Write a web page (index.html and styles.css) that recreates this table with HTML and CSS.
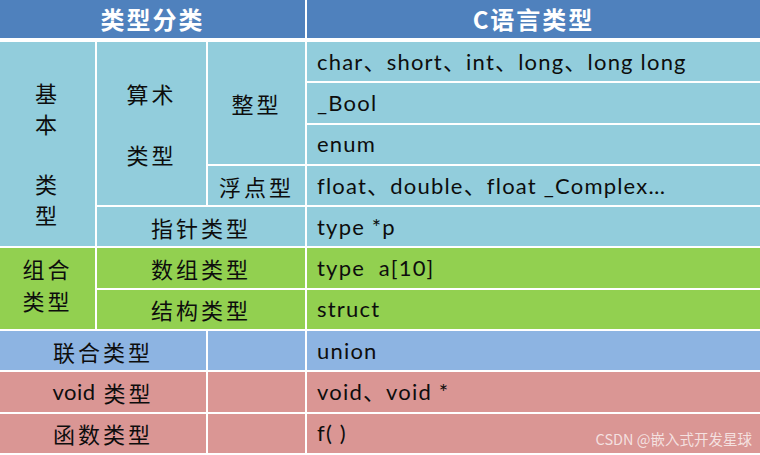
FILE: index.html
```html
<!DOCTYPE html>
<html lang="zh-CN">
<head>
<meta charset="utf-8">
<title>C语言类型</title>
<link rel="stylesheet" href="styles.css">
</head>
<body>
<div class="page">
  <div class="head">
    <div class="hcell">类型分类</div>
    <div class="hcell">C语言类型</div>
  </div>
  <div class="grid">
    <div class="cell cy c1 r1s5 stack"><span>基</span><span>本</span><span class="blank"></span><span>类</span><span>型</span></div>
    <div class="cell cy c2 r1s4 stack two"><span>算术</span><span class="blank"></span><span>类型</span></div>
    <div class="cell cy c3 r1s3 zh">整型</div>
    <div class="cell cy c4 r1 code">char、short、int、long、long long</div>
    <div class="cell cy c4 r2 code">_Bool</div>
    <div class="cell cy c4 r3 code">enum</div>
    <div class="cell cy c3 r4 zh">浮点型</div>
    <div class="cell cy c4 r4 code">float、double、float _Complex…</div>
    <div class="cell cy c23 r5 zh">指针类型</div>
    <div class="cell cy c4 r5 code">type *p</div>

    <div class="cell gr c1 r6s2 stack combo"><span>组合</span><span>类型</span></div>
    <div class="cell gr c23 r6 zh">数组类型</div>
    <div class="cell gr c4 r6 code">type&nbsp; a[10]</div>
    <div class="cell gr c23 r7 zh">结构类型</div>
    <div class="cell gr c4 r7 code">struct</div>

    <div class="cell bl c12 r8 zh">联合类型</div>
    <div class="cell bl c3 r8"></div>
    <div class="cell bl c4 r8 code">union</div>

    <div class="cell pk c12 r9 zh"><span class="lat">void</span>&nbsp;类型</div>
    <div class="cell pk c3 r9"></div>
    <div class="cell pk c4 r9 code">void、void *</div>

    <div class="cell pk c12 r10 zh">函数类型</div>
    <div class="cell pk c3 r10"></div>
    <div class="cell pk c4 r10 code">f( )</div>
  </div>
  <div class="mark">CSDN @嵌入式开发星球</div>
</div>
</body>
</html>
```

FILE: styles.css
```css
html, body {
  margin: 0;
  padding: 0;
  background: #ffffff;
}
body {
  width: 760px;
  height: 455px;
  overflow: hidden;
  font-family: "Noto Sans CJK SC", "Noto Sans", sans-serif;
}
.page {
  position: relative;
  width: 760px;
  height: 455px;
  background: #ffffff;
}
.head {
  display: grid;
  grid-template-columns: 305px 1fr;
  column-gap: 2px;
  height: 38px;
  margin-bottom: 4px;
}
.hcell {
  background: #4f81bd;
  color: #ffffff;
  font-size: 24px;
  font-weight: 700;
  letter-spacing: 2px;
  display: flex;
  align-items: center;
  justify-content: center;
  line-height: 1;
}
.grid {
  display: grid;
  grid-template-columns: 95px 109px 97px 1fr;
  grid-auto-rows: 39.3px;
  gap: 2px;
}
.cell {
  display: flex;
  align-items: center;
  justify-content: center;
  color: #0d0d0d;
  line-height: 1;
}
.cy { background: #92cddc; }
.gr { background: #92d050; }
.bl { background: #8db4e2; }
.pk { background: #da9694; }

.zh {
  font-size: 22px;
  letter-spacing: 3px;
}
.lat {
  font-family: "Lato", "Noto Sans", sans-serif;
  letter-spacing: 0.5px;
  font-size: 22px;
}
.code {
  justify-content: flex-start;
  padding-left: 10px;
  font-family: "Lato", "Noto Sans CJK SC", sans-serif;
  font-size: 22px;
  letter-spacing: 1.2px;
}
.stack {
  flex-direction: column;
  font-size: 22px;
  letter-spacing: 3px;
}
.stack span {
  display: block;
  height: 30.5px;
  line-height: 30.5px;
}
.stack .blank { height: 30px; }
.c1.r1s5.stack { padding-top: 18px; }
.stack.two { padding-top: 0; }
.combo span { height: 32px; line-height: 32px; }
.combo { padding-bottom: 10px; }

.c1 { grid-column: 1; }
.c2 { grid-column: 2; }
.c3 { grid-column: 3; }
.c4 { grid-column: 4; }
.c23 { grid-column: 2 / 4; }
.c12 { grid-column: 1 / 3; }

.r1 { grid-row: 1; }
.r2 { grid-row: 2; }
.r3 { grid-row: 3; }
.r4 { grid-row: 4; }
.r5 { grid-row: 5; }
.r6 { grid-row: 6; }
.r7 { grid-row: 7; }
.r8 { grid-row: 8; }
.r9 { grid-row: 9; }
.r10 { grid-row: 10; }
.r1s5 { grid-row: 1 / span 5; }
.r1s4 { grid-row: 1 / span 4; }
.r1s3 { grid-row: 1 / span 3; }
.r6s2 { grid-row: 6 / span 2; }

.mark {
  position: absolute;
  right: 8px;
  bottom: 6px;
  font-size: 14.5px;
  color: rgba(255, 255, 255, 0.72);
  font-family: "Noto Sans CJK SC", "Noto Sans", sans-serif;
  letter-spacing: 0;
}
```
